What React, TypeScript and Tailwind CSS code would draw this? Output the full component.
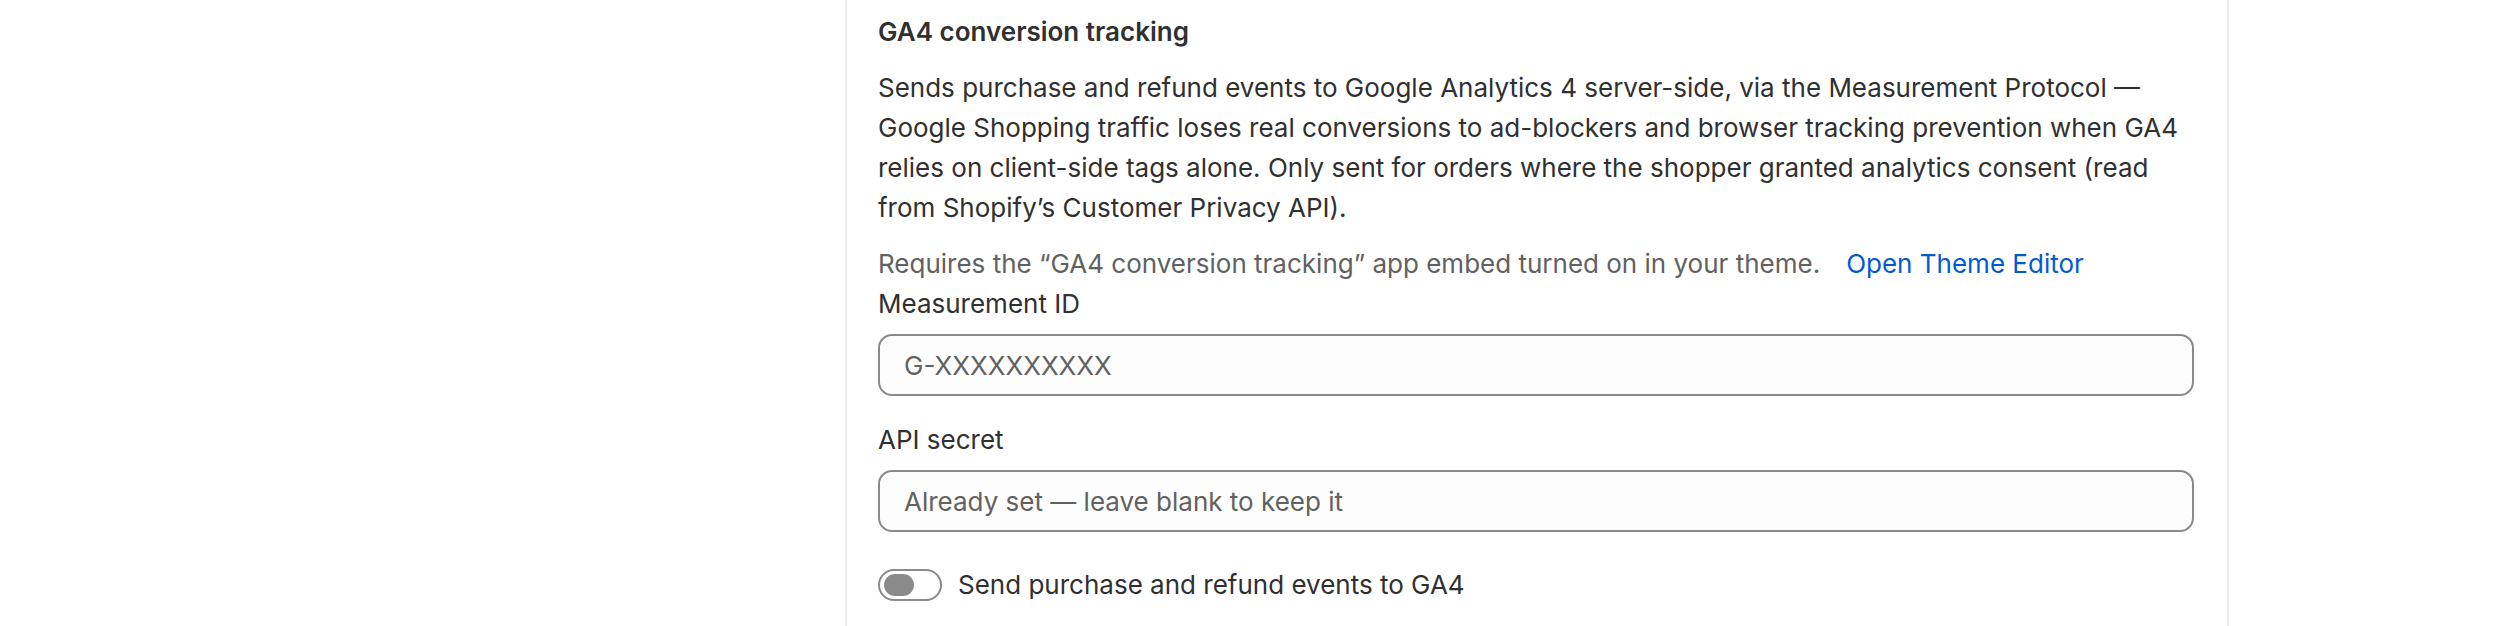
import React from "react";

export default function App() {
  return (
    <div
      className="w-[2506px] h-[626px] bg-white overflow-hidden"
      style={{ fontFamily: "Inter, 'Noto Sans', sans-serif" }}
    >
      <div className="ml-[845px] w-[1384px] h-[626px] border-x-2 border-[#ebebeb] bg-white pl-[31px] pr-[33px] pt-[12px] text-[#303030]">
        <h2 className="text-[26px] leading-[40px] font-semibold">GA4 conversion tracking</h2>
        <p className="mt-[16px] text-[26px] leading-[40px]">
          Sends purchase and refund events to Google Analytics 4 server-side, via the Measurement Protocol —
          Google Shopping traffic loses real conversions to ad-blockers and browser tracking prevention when GA4
          relies on client-side tags alone. Only sent for orders where the shopper granted analytics consent (read
          from Shopify’s Customer Privacy API).
        </p>
        <div className="mt-[16px] flex items-center text-[26px] leading-[40px]">
          <span className="text-[#616161]">Requires the “GA4 conversion tracking” app embed turned on in your theme.</span>
          <a className="ml-[26px] text-[#005bd3] cursor-pointer">Open Theme Editor</a>
        </div>
        <div className="flex flex-col">
          <label className="text-[26px] leading-[40px]">Measurement ID</label>
          <div className="mt-[10px] h-[62px] rounded-[14px] border-2 border-[#8a8a8a] bg-[#fdfdfd] flex items-center px-[24px]">
            <span className="text-[26px] text-[#616161]">G-XXXXXXXXXX</span>
          </div>
        </div>
        <div className="mt-[24px] flex flex-col">
          <label className="text-[26px] leading-[40px]">API secret</label>
          <div className="mt-[10px] h-[62px] rounded-[14px] border-2 border-[#8a8a8a] bg-[#fdfdfd] flex items-center px-[24px]">
            <span className="text-[26px] text-[#616161]">Already set — leave blank to keep it</span>
          </div>
        </div>
        <div className="mt-[33px] flex items-center gap-[16px]">
          <div className="w-[64px] h-[32px] rounded-full border-2 border-[#8a8a8a] bg-white flex items-center pl-[4px]">
            <div className="w-[30px] h-[22px] rounded-full bg-[#8a8a8a]" />
          </div>
          <span className="text-[26px] leading-[40px]">Send purchase and refund events to GA4</span>
        </div>
      </div>
    </div>
  );
}
